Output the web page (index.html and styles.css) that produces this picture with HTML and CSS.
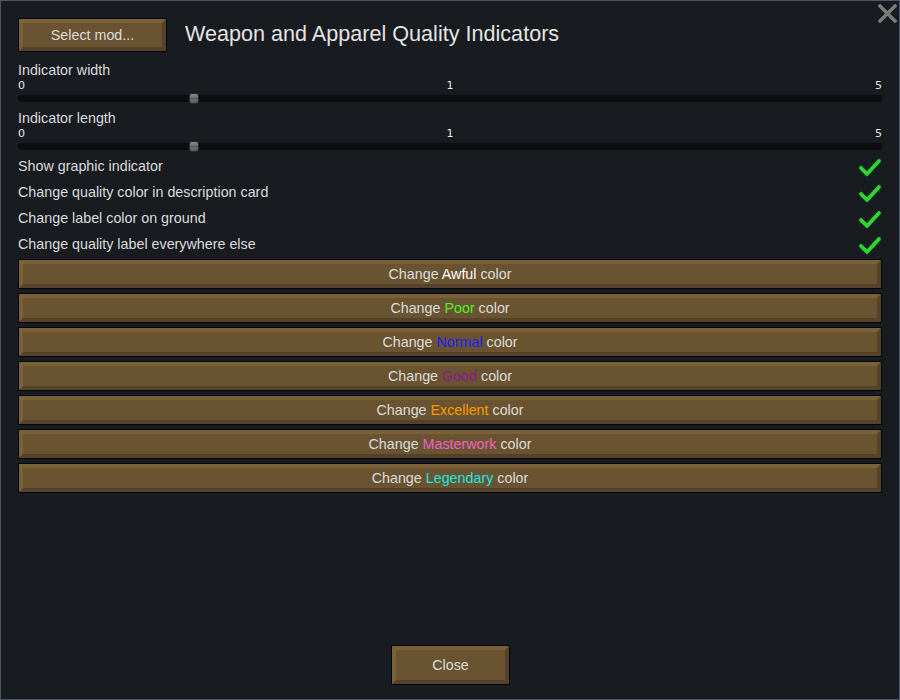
FILE: index.html
```html
<!DOCTYPE html>
<html>
<head>
<meta charset='UTF-8'>
<link rel="stylesheet" href="styles.css">
</head>
<body>
<div class='window'>
<div class='close-x'>
<svg width='19' height='19' viewBox='0 0 19 19'>
<path d='M2 2 L17 17 M17 2 L2 17' stroke='#7b7b7b' stroke-width='3.4' stroke-linecap='square'/>
</svg>
</div>
<div class='header'>
<div class='btn select-mod'><span>Select mod...</span></div>
<div class='title'>Weapon and Apparel Quality Indicators</div>
</div>
<div class='sliders'>
<div class='slider'>
<div class='label'>Indicator width</div>
<div class='scale'><span>0</span><span>1</span><span>5</span></div>
<div class='track-zone'><div class='track'><div class='thumb'></div></div></div>
</div>
<div class='slider'>
<div class='label'>Indicator length</div>
<div class='scale'><span>0</span><span>1</span><span>5</span></div>
<div class='track-zone'><div class='track'><div class='thumb'></div></div></div>
</div>
</div>
<div class='checks'>
<div class='check-row'><span>Show graphic indicator</span><svg class='tick' width='24' height='20' viewBox='0 0 24 20'><path d='M3 11 L9 17 L21 4' fill='none' stroke='#0f3a12' stroke-width='6' stroke-linecap='round' stroke-linejoin='round'/><path d='M3 11 L9 17 L21 4' fill='none' stroke='#33d33a' stroke-width='3.6' stroke-linecap='round' stroke-linejoin='round'/></svg></div>
<div class='check-row'><span>Change quality color in description card</span><svg class='tick' width='24' height='20' viewBox='0 0 24 20'><path d='M3 11 L9 17 L21 4' fill='none' stroke='#0f3a12' stroke-width='6' stroke-linecap='round' stroke-linejoin='round'/><path d='M3 11 L9 17 L21 4' fill='none' stroke='#33d33a' stroke-width='3.6' stroke-linecap='round' stroke-linejoin='round'/></svg></div>
<div class='check-row'><span>Change label color on ground</span><svg class='tick' width='24' height='20' viewBox='0 0 24 20'><path d='M3 11 L9 17 L21 4' fill='none' stroke='#0f3a12' stroke-width='6' stroke-linecap='round' stroke-linejoin='round'/><path d='M3 11 L9 17 L21 4' fill='none' stroke='#33d33a' stroke-width='3.6' stroke-linecap='round' stroke-linejoin='round'/></svg></div>
<div class='check-row'><span>Change quality label everywhere else</span><svg class='tick' width='24' height='20' viewBox='0 0 24 20'><path d='M3 11 L9 17 L21 4' fill='none' stroke='#0f3a12' stroke-width='6' stroke-linecap='round' stroke-linejoin='round'/><path d='M3 11 L9 17 L21 4' fill='none' stroke='#33d33a' stroke-width='3.6' stroke-linecap='round' stroke-linejoin='round'/></svg></div>
</div>
<div class='colors'>
<div class='btn wide'><span>Change <span class='q-awful'>Awful</span> color</span></div>
<div class='btn wide'><span>Change <span class='q-poor'>Poor</span> color</span></div>
<div class='btn wide'><span>Change <span class='q-normal'>Normal</span> color</span></div>
<div class='btn wide'><span>Change <span class='q-good'>Good</span> color</span></div>
<div class='btn wide'><span>Change <span class='q-excellent'>Excellent</span> color</span></div>
<div class='btn wide'><span>Change <span class='q-masterwork'>Masterwork</span> color</span></div>
<div class='btn wide'><span>Change <span class='q-legendary'>Legendary</span> color</span></div>
</div>
<div class='footer'>
<div class='btn close'><span>Close</span></div>
</div>
</div>
</body>
</html>
```
FILE: styles.css
```css
/* Variables */

:root {
    --bg: #181b20;
    --frame: #4b5565;
    --text: #dcdcdc;
    --btn-fill: #6a5330;
    --btn-light: #7b6137;
    --btn-dark: #54432a;
    --ui-size: 14.3px;
}

* {
    margin: 0;
    padding: 0;
    box-sizing: border-box;
}

body {
    background: var(--bg);
    font-family: "Liberation Sans", Arial, sans-serif;
    color: var(--text);
}

.window {
    width: 900px;
    height: 700px;
    border: 1px solid var(--frame);
    background: var(--bg);
    padding: 17px 17px 15px 17px;
    position: relative;
    display: flex;
    flex-direction: column;
}

.close-x {
    position: absolute;
    top: 3px;
    right: 2px;
    width: 19px;
    height: 19px;
}

/* Header */

.header {
    display: flex;
    align-items: center;
    gap: 19px;
    height: 34px;
}

.title {
    font-size: 21.6px;
    color: #e4e4e4;
    margin-bottom: 3px;
}

/* Buttons */

.btn {
    background: var(--btn-fill);
    border: 4px solid;
    border-color: var(--btn-light) var(--btn-dark) var(--btn-dark) var(--btn-light);
    box-shadow: 0 0 0 1px #050505;
    color: var(--text);
    font-size: var(--ui-size);
    text-align: center;
    display: flex;
    align-items: center;
    justify-content: center;
    cursor: pointer;
}

.select-mod {
    width: 147px;
    height: 32px;
    margin-left: 1px;
}

/* Sliders */

.sliders {
    display: flex;
    flex-direction: column;
    gap: 6px;
    margin-top: 10px;
}

.label {
    font-size: var(--ui-size);
    line-height: 16px;
}

.scale {
    display: flex;
    justify-content: space-between;
    font-family: "DejaVu Sans", sans-serif;
    font-size: 11px;
    line-height: 12px;
    padding-top: 2px;
    height: 14px;
    color: #e8e8e8;
}

.track-zone {
    height: 12px;
    display: flex;
    align-items: center;
}

.track {
    width: 100%;
    height: 7px;
    background: #0b0d10;
    border-radius: 4px;
    position: relative;
}

.thumb {
    position: absolute;
    left: 171px;
    top: -2px;
    width: 10px;
    height: 11px;
    border-radius: 3px;
    background: linear-gradient(#8a8a8a, #6e6e6e 45%, #555 50%, #6e6e6e 55%, #5e5e5e);
    border: 1px solid #2c2c2c;
}

/* Checkboxes */

.checks {
    display: flex;
    flex-direction: column;
    margin-top: 1px;
}

.check-row {
    height: 26px;
    display: flex;
    align-items: center;
    justify-content: space-between;
    font-size: var(--ui-size);
}

.tick {
    margin-top: 1px;
}

/* Quality colour buttons */

.colors {
    display: flex;
    flex-direction: column;
    gap: 6px;
    margin-top: 3px;
    padding: 0 1px;
}

.wide {
    height: 28px;
}

.q-awful { color: #ffffff; }
.q-poor { color: #4cf52c; }
.q-normal { color: #1c1cff; }
.q-good { color: #8c1890; }
.q-excellent { color: #ff9a00; }
.q-masterwork { color: #f062c8; }
.q-legendary { color: #14e8e8; }

/* Footer */

.footer {
    margin-top: auto;
    display: flex;
    justify-content: center;
}

.close {
    width: 117px;
    height: 38px;
    margin-left: 1px;
}
```
